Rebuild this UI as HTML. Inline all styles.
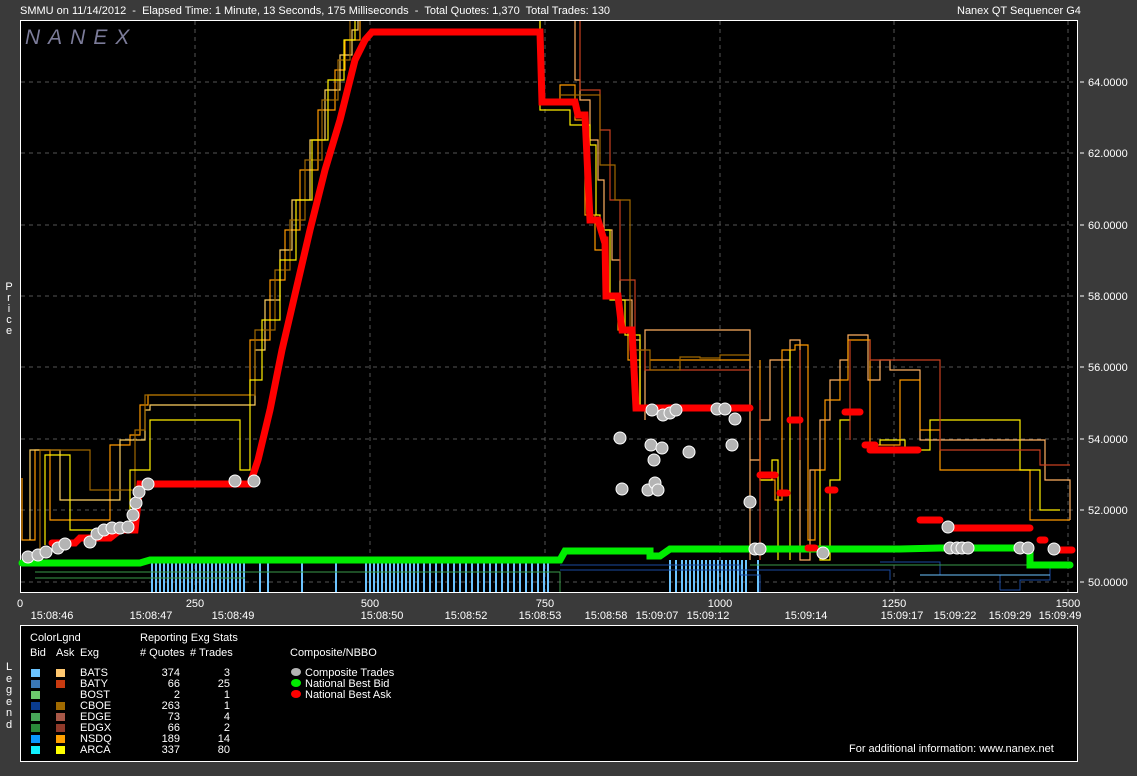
<!DOCTYPE html>
<html><head><meta charset="utf-8"><style>
html,body{margin:0;padding:0;background:#3a3a3a;width:1137px;height:776px;overflow:hidden;font-family:"Liberation Sans",sans-serif;color:#fff}
.t{position:absolute;font-size:11px;white-space:pre}
</style></head><body>
<div class="t" style="left:20px;top:5px">SMMU on 11/14/2012  -  Elapsed Time: 1 Minute, 13 Seconds, 175 Milliseconds  -  Total Quotes: 1,370  Total Trades: 130</div>
<div class="t" style="left:957px;top:5px">Nanex QT Sequencer G4</div>
<div class="t" style="left:5px;top:282px;line-height:11px;width:8px;text-align:center">P<br>r<br>i<br>c<br>e</div>
<div class="t" style="left:5px;top:662px;line-height:11.5px;width:8px;text-align:center">L<br>e<br>g<br>e<br>n<br>d</div>
<svg width="1137" height="776" style="position:absolute;left:0;top:0" font-family="Liberation Sans" font-size="11">
<rect x="20.5" y="20.5" width="1057" height="572" fill="#000" stroke="#fff"/>
<text x="25" y="44" fill="#7c7c9a" font-size="21" font-style="italic" letter-spacing="8">NANEX</text>
<g stroke="#555" stroke-dasharray="4,4" stroke-width="1">
<line x1="21" x2="1077" y1="82" y2="82"/><line x1="21" x2="1077" y1="153" y2="153"/><line x1="21" x2="1077" y1="225" y2="225"/><line x1="21" x2="1077" y1="296" y2="296"/><line x1="21" x2="1077" y1="367" y2="367"/><line x1="21" x2="1077" y1="439" y2="439"/><line x1="21" x2="1077" y1="510" y2="510"/><line x1="21" x2="1077" y1="582" y2="582"/>
<line y1="21" y2="592" x1="195" x2="195"/><line y1="21" y2="592" x1="370" x2="370"/><line y1="21" y2="592" x1="545" x2="545"/><line y1="21" y2="592" x1="720" x2="720"/><line y1="21" y2="592" x1="894" x2="894"/><line y1="21" y2="592" x1="1068" x2="1068"/>
</g>
<g stroke="#6cc4ff" stroke-width="2">
<path d="M152 562V592M156 562V592M160 562V592M164 562V592M168 562V592M172 562V592M176 562V592M180 562V592M184 562V592M188 562V592M192 562V592M196 562V592M200 562V592M204 562V592M208 562V592M212 562V592M216 562V592M220 562V592M224 562V592M228 562V592M232 562V592M236 562V592M240 562V592M244 562V592M260 562V592M268 562V592M302 562V592M336 562V592M366 562V592M370 562V592M374 562V592M378 562V592M382 562V592M386 562V592M390 562V592M394 562V592M398 562V592M402 562V592M406 562V592M410 562V592M414 562V592M418 562V592M424 562V592M430 562V592M436 562V592M442 562V592M448 562V592M454 562V592M460 562V592M466 562V592M472 562V592M478 562V592M484 562V592M490 562V592M496 562V592M502 562V592M508 562V592M514 562V592M520 562V592M526 562V592M532 562V592M538 562V592M544 562V592M548 562V592M670 560V592M676 560V592M682 560V592M686 560V592M690 560V592M694 560V592M698 560V592M702 560V592M706 560V592M710 560V592M714 560V592M718 560V592M722 560V592M726 560V592M730 560V592M734 560V592M738 560V592M742 560V592M746 560V592M758 560V592"/>
</g>
<g fill="none" stroke-width="1">
<path d="M35 572H560V592M35 578H245" stroke="#3a9a4a"/>
<path d="M560 565H740V575H760V592M560 570H890V580M900 565H1070" stroke="#1a4aa0"/>
<path d="M880 562H940V575H1000V590M1000 590H1020V580H1050V565H1070" stroke="#1a4aa0"/>
<path d="M750 565H1070" stroke="#3a9a4a"/>
<path d="M920 575H1050" stroke="#6cc4ff"/>
</g>
<g fill="none" stroke-width="1.2">
<path d="M22 478V540H35V450H50V520H110V445H130V435H140V405H148V395H250V340H270V280H285V230H300V170H318V110H335V70H345V40H360V21" stroke="#ff9a00"/>
<path d="M30 540V450H60V500H120V440H145V410H150V405H255V350H265V300H280V250H292V200H310V140H325V90H340V55H352V30H358V21" stroke="#ffd060"/>
<path d="M40 560V450H90V490H135V430H145V395H255V330H275V270H290V220H305V160H322V100H338V60H350V21" stroke="#a06800"/>
<path d="M45 545V455H70V530H130V470H150V420H240V470H250V380H262V320H280V260H296V200H312V140H328V80H344V40H355V21" stroke="#ffee00"/>
<path d="M575 21V80H580V100H590V140H598V180H604V230H612V260H620V300H632V340H640V410H645V420M645 420V330H750V560M750 560V460H760V420H770V360H790V340H800V560H810V470H820V420H830V380H840V360H848V335H868V380H880V360H890V370H920V440H1045V480H1070V520" stroke="#ffb060"/>
<path d="M540 21V100H560V85H575V120H585V215H595V250H605V295H618V330H628V360H640V410M650 360H750M760 360V480H775V500H782V350H795V345H808V540H815V470H825V400H840V380H848V340H870V445H900V380H920V430H940V470H1030V520H1070" stroke="#ff9a00"/>
<path d="M540 21V110H570V125H590V145H596V215H600V230H610V300H625V335H640V410M760 430V480H772V460H778V560M790 350V560M820 470V560H830V480H840V420H850V410M880 445V440H905V450H930V420H1020V470H1040V510H1060" stroke="#ffee00"/>
<path d="M580 21V90H600V130H610V200H620V280H635V350H645V370H750M760 400V560M800 350V460M850 340V440M870 340V360H940V450H1040V465H1070" stroke="#c84020"/>
<path d="M560 95H600V165H615V200H630V350H650V370H680V357H700V358H720V355H750" stroke="#a06800"/>
</g>
<path d="M22 563H140L150 560H560L565 551H650V556H660L670 549H900L940 548H1030V565H1070" fill="none" stroke="#00ee00" stroke-width="7" stroke-linecap="round"/>
<path d="M52 543H75L80 538H110L120 530H135L140 484H250L258 460L270 410L282 350L296 290L310 230L325 170L340 120L355 60L365 40L372 32H540L542 102H575L578 115H585L590 220H598L604 240H605L606 296H618L622 330H632L636 408H750M760 475H775M780 493H787M790 420H800M808 548H815M828 490H835M845 412H860M865 445H875M870 450H918M920 520H940M950 528H1030M1040 540H1045M1060 550H1072" fill="none" stroke="#ff0000" stroke-width="7" stroke-linecap="round"/>
<g fill="#b4b4b4" stroke="#fff" stroke-width="1">
<circle cx="28" cy="557" r="6"/><circle cx="38" cy="555" r="6"/><circle cx="46" cy="552" r="6"/><circle cx="58" cy="548" r="6"/><circle cx="65" cy="544" r="6"/><circle cx="90" cy="542" r="6"/><circle cx="97" cy="534" r="6"/><circle cx="104" cy="530" r="6"/><circle cx="112" cy="528" r="6"/><circle cx="120" cy="528" r="6"/><circle cx="128" cy="527" r="6"/><circle cx="133" cy="515" r="6"/><circle cx="136" cy="503" r="6"/><circle cx="139" cy="492" r="6"/><circle cx="148" cy="484" r="6"/><circle cx="235" cy="481" r="6"/><circle cx="254" cy="481" r="6"/>
<circle cx="652" cy="410" r="6"/><circle cx="663" cy="415" r="6"/><circle cx="670" cy="413" r="6"/><circle cx="676" cy="410" r="6"/><circle cx="717" cy="409" r="6"/><circle cx="725" cy="409" r="6"/><circle cx="735" cy="419" r="6"/><circle cx="620" cy="438" r="6"/><circle cx="651" cy="445" r="6"/><circle cx="662" cy="448" r="6"/><circle cx="654" cy="460" r="6"/><circle cx="689" cy="452" r="6"/><circle cx="732" cy="445" r="6"/><circle cx="622" cy="489" r="6"/><circle cx="648" cy="490" r="6"/><circle cx="655" cy="483" r="6"/><circle cx="658" cy="490" r="6"/><circle cx="750" cy="502" r="6"/><circle cx="755" cy="549" r="6"/><circle cx="760" cy="549" r="6"/><circle cx="823" cy="553" r="6"/>
<circle cx="948" cy="527" r="6"/><circle cx="950" cy="548" r="6"/><circle cx="957" cy="548" r="6"/><circle cx="962" cy="548" r="6"/><circle cx="968" cy="548" r="6"/><circle cx="1020" cy="548" r="6"/><circle cx="1028" cy="548" r="6"/><circle cx="1054" cy="549" r="6"/>
</g>
<g fill="#fff" text-anchor="start">
<text x="1088" y="86">64.0000</text><text x="1088" y="157">62.0000</text><text x="1088" y="229">60.0000</text><text x="1088" y="300">58.0000</text><text x="1088" y="371">56.0000</text><text x="1088" y="443">54.0000</text><text x="1088" y="514">52.0000</text><text x="1088" y="586">50.0000</text>
</g>
<g stroke="#fff"><line x1="1080" x2="1084" y1="82" y2="82"/><line x1="1080" x2="1084" y1="153" y2="153"/><line x1="1080" x2="1084" y1="225" y2="225"/><line x1="1080" x2="1084" y1="296" y2="296"/><line x1="1080" x2="1084" y1="367" y2="367"/><line x1="1080" x2="1084" y1="439" y2="439"/><line x1="1080" x2="1084" y1="510" y2="510"/><line x1="1080" x2="1084" y1="582" y2="582"/></g>
<g fill="#fff" text-anchor="middle">
<text x="20" y="607">0</text><text x="195" y="607">250</text><text x="370" y="607">500</text><text x="545" y="607">750</text><text x="720" y="607">1000</text><text x="894" y="607">1250</text><text x="1068" y="607">1500</text>
<text x="52" y="619">15:08:46</text><text x="151" y="619">15:08:47</text><text x="233" y="619">15:08:49</text><text x="382" y="619">15:08:50</text><text x="466" y="619">15:08:52</text><text x="540" y="619">15:08:53</text><text x="606" y="619">15:08:58</text><text x="657" y="619">15:09:07</text><text x="708" y="619">15:09:12</text><text x="806" y="619">15:09:14</text><text x="902" y="619">15:09:17</text><text x="955" y="619">15:09:22</text><text x="1010" y="619">15:09:29</text><text x="1060" y="619">15:09:49</text>
</g>
<rect x="20.5" y="625.5" width="1057" height="136" fill="#000" stroke="#fff"/>
<g fill="#fff">
<text x="30" y="641">ColorLgnd</text><text x="140" y="641">Reporting Exg Stats</text>
<text x="30" y="656">Bid</text><text x="56" y="656">Ask</text><text x="80" y="656">Exg</text><text x="140" y="656"># Quotes</text><text x="190" y="656"># Trades</text><text x="290" y="656">Composite/NBBO</text>
<text x="80" y="676">BATS</text><text x="80" y="687">BATY</text><text x="80" y="698">BOST</text><text x="80" y="709">CBOE</text><text x="80" y="720">EDGE</text><text x="80" y="731">EDGX</text><text x="80" y="742">NSDQ</text><text x="80" y="753">ARCA</text>
<g text-anchor="end"><text x="180" y="676">374</text><text x="180" y="687">66</text><text x="180" y="698">2</text><text x="180" y="709">263</text><text x="180" y="720">73</text><text x="180" y="731">66</text><text x="180" y="742">189</text><text x="180" y="753">337</text>
<text x="230" y="676">3</text><text x="230" y="687">25</text><text x="230" y="698">1</text><text x="230" y="709">1</text><text x="230" y="720">4</text><text x="230" y="731">2</text><text x="230" y="742">14</text><text x="230" y="753">80</text></g>
<text x="305" y="676">Composite Trades</text><text x="305" y="687">National Best Bid</text><text x="305" y="698">National Best Ask</text>
<text x="849" y="752">For additional information: www.nanex.net</text>
</g>
<ellipse cx="296" cy="672" rx="5" ry="4" fill="#b4b4b4"/><ellipse cx="296" cy="683" rx="5" ry="4" fill="#00ee00"/><ellipse cx="296" cy="694" rx="5" ry="4" fill="#ff0000"/>
<g>
<rect x="31" y="669" width="9" height="8" fill="#6cc4ff"/><rect x="56" y="669" width="9" height="8" fill="#ffc870"/>
<rect x="31" y="680" width="9" height="8" fill="#3a78b8"/><rect x="56" y="680" width="9" height="8" fill="#c83a10"/>
<rect x="31" y="691" width="9" height="8" fill="#6cc86c"/>
<rect x="31" y="702" width="9" height="8" fill="#0a3c90"/><rect x="56" y="702" width="9" height="8" fill="#a06a00"/>
<rect x="31" y="713" width="9" height="8" fill="#48a858"/><rect x="56" y="713" width="9" height="8" fill="#a85848"/>
<rect x="31" y="724" width="9" height="8" fill="#2a8a3a"/><rect x="56" y="724" width="9" height="8" fill="#903a2a"/>
<rect x="31" y="735" width="9" height="8" fill="#0a98ff"/><rect x="56" y="735" width="9" height="8" fill="#ffa000"/>
<rect x="31" y="746" width="9" height="8" fill="#10f0ff"/><rect x="56" y="746" width="9" height="8" fill="#ffff00"/>
</g>
</svg>
</body></html>
